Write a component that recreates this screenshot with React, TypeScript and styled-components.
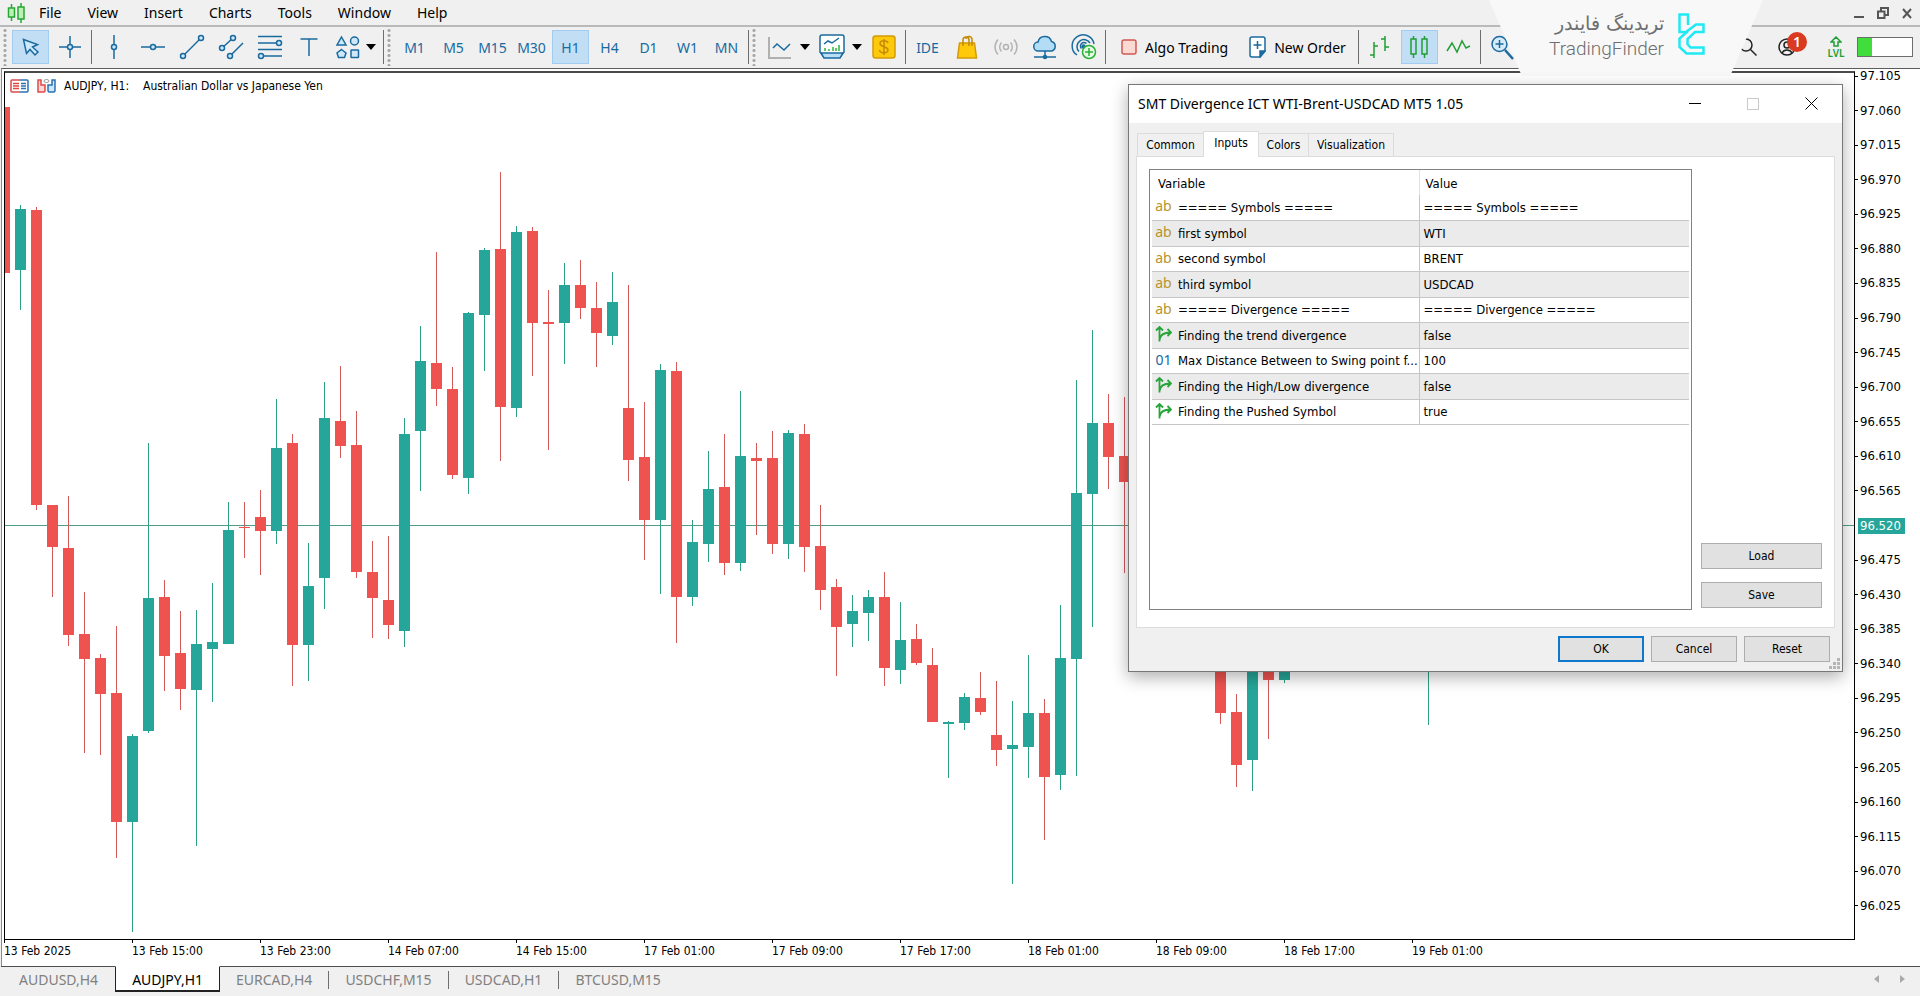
import React from 'react';
import styled, { createGlobalStyle, css } from 'styled-components';

const UI = '"Noto Sans", "Open Sans", sans-serif';
const TAHOMA = '"DejaVu Sans Condensed", "DejaVu Sans", sans-serif';
const BLUE = '#1a6a9f';
const PALE = '#cfe9fb';
const GREEN = '#1f9f33';
const UP = '#26a69a';
const DOWN = '#ef5350';

const GlobalStyle = createGlobalStyle`
  *, *::before, *::after { box-sizing: border-box; }
  html, body { margin: 0; padding: 0; }
  body { background: #f0f0f0; font-family: ${UI}; color: #000; overflow: hidden; }
  button { font: inherit; color: inherit; background: none; border: 0; padding: 0; margin: 0; }
`;

/* ---------- shell ---------- */

const Shell = styled.div`
  position: relative;
  display: flex;
  flex-direction: column;
  height: 100vh;
  background: #f0f0f0;
`;

const MenuBar = styled.nav`
  display: flex;
  align-items: center;
  height: 27px;
  padding: 0 7px;
  border-bottom: 2px solid #b9b9b9;
`;

const MenuItem = styled.button`
  padding: 0 13px;
  font-size: 14px;
  line-height: 24px;
`;

const WindowControls = styled.div`
  display: flex;
  gap: 12px;
  margin-left: auto;
`;

const WindowControl = styled.button`
  display: flex;
  width: 12px;
  height: 12px;
`;

const Toolbar = styled.div`
  display: flex;
  align-items: center;
  height: 41px;
  padding: 0 7px 1px 3px;
`;

const Grip = styled.span`
  width: 4px;
  height: 38px;
  margin-right: 5px;
  background: radial-gradient(circle, #a5a5a5 1px, transparent 2px) 0 0 / 4px 5px repeat-y;
`;

const Separator = styled.span`
  width: 1px;
  height: 34px;
  margin: 0 3px;
  background: #6d6d6d;
`;

const Group = styled.div`
  display: flex;
  gap: 2px;
`;

const ToolButton = styled.button<{ $active?: boolean }>`
  display: flex;
  align-items: center;
  justify-content: center;
  width: 37px;
  height: 34px;
  font-size: 14px;
  color: ${BLUE};
  ${(p) =>
    p.$active &&
    css`
      background: #c2def5;
      outline: 1px solid #a3cdf0;
      outline-offset: -1px;
    `}
`;

const DropButton = styled.button<{ $last?: boolean }>`
  width: 9px;
  height: 34px;
  margin-right: ${(p) => (p.$last ? 5 : 2)}px;
  display: flex;
  align-items: center;
`;

const Caret = styled.span`
  border: 5px solid transparent;
  border-top: 6px solid #000;
  border-bottom: 0;
`;

const LabelButton = styled.button`
  display: flex;
  align-items: center;
  gap: 8px;
  height: 34px;
  padding: 0 9px 0 12px;
  font-size: 14px;
  white-space: nowrap;
`;

const StatusGroup = styled.div`
  display: flex;
  align-items: center;
  margin-left: auto;
  gap: 11px;
`;

const AccountButton = styled.button`
  position: relative;
  display: flex;
  width: 38px;
  height: 30px;
  align-items: center;
  padding-left: 1px;
`;

const Badge = styled.span`
  position: absolute;
  left: 10px;
  top: 0;
  width: 20px;
  height: 20px;
  border-radius: 50%;
  background: #d93a20;
  color: #fff;
  font-size: 14px;
  font-weight: 600;
  line-height: 20px;
  text-align: center;
`;

const Level = styled.div`
  display: flex;
  flex-direction: column;
  align-items: center;
  width: 20px;
  font-size: 10px;
  line-height: 10px;
  font-weight: 600;
  color: ${GREEN};
`;

const Battery = styled.div`
  width: 56px;
  height: 20px;
  border: 1px solid #6d6d6d;
  background: linear-gradient(90deg, #41dd3c 14px, #fff 14px);
`;

/* ---------- brand ---------- */

const Brand = styled.aside`
  position: absolute;
  top: 0;
  right: 157px;
  width: 274px;
  height: 76px;
  display: flex;
  justify-content: center;
  align-items: flex-start;
  gap: 14px;
  padding: 10px 0 0 2px;
  background: #f8f8f8;
  clip-path: polygon(0 0, 100% 0, 88% 100%, 12% 100%);
`;

const BrandText = styled.div`
  display: flex;
  flex-direction: column;
  align-items: flex-end;
  font-family: Roboto, sans-serif;
  font-weight: 300;
  font-size: 19px;
  line-height: 26px;
  color: #6e6e6e;
`;

const BrandNative = styled.span`
  font-family: "DejaVu Sans", sans-serif;
  font-weight: 200;
`;

/* ---------- chart ---------- */

const ChartWindow = styled.main`
  flex: 1;
  min-height: 0;
  display: grid;
  grid-template-columns: minmax(0, 1fr) 65px;
  grid-template-rows: minmax(0, 1fr) 26px;
  margin-left: 1px;
  padding-left: 3px;
  border-top: 1px solid #5c5c5c;
  border-left: 1px solid #8a8a8a;
  background: #fff;
`;

const Plot = styled.section`
  display: flex;
  flex-direction: column;
  min-height: 0;
  margin-top: 2px;
  margin-left: -1px;
  border: 1px solid #000;
  border-top: 2px solid #4a4a4a;
`;

const PlotTitle = styled.header`
  display: flex;
  align-items: center;
  gap: 8px;
  height: 26px;
  padding-left: 5px;
  font-family: ${TAHOMA};
  font-size: 12px;
`;

const PlotSymbol = styled.span`
  min-width: 71px;
`;

const Candles = styled.svg`
  flex: 1;
  min-height: 0;
  width: 100%;
  overflow: hidden;
  shape-rendering: crispEdges;
`;

const PriceScale = styled.ol`
  display: flex;
  flex-direction: column;
  justify-content: space-between;
  list-style: none;
  margin: 4px 0 0;
  padding: 0 0 31px;
`;

const Price = styled.li<{ $current?: boolean }>`
  display: flex;
  align-items: center;
  gap: 2px;
  height: 6px;
  font-family: ${TAHOMA};
  font-size: 13px;
  line-height: 6px;
  &::before {
    content: "";
    width: 3px;
    height: 1px;
    background: #000;
  }
  ${(p) =>
    p.$current &&
    css`
      width: 47px;
      height: 16px;
      margin: -5px 0 -5px 3px;
      padding-left: 2px;
      gap: 0;
      background: ${UP};
      color: #fff;
      &::before { display: none; }
    `}
`;

const TimeScale = styled.ol`
  grid-column: 1 / -1;
  display: flex;
  list-style: none;
  margin: 0 0 0 -1px;
  padding: 0;
`;

const Time = styled.li`
  flex: 0 0 128px;
  font-family: ${TAHOMA};
  font-size: 12px;
  line-height: 16px;
  &::before {
    content: "";
    display: block;
    width: 1px;
    height: 3px;
    background: #000;
  }
`;

const ChartTabs = styled.footer`
  display: flex;
  align-items: flex-start;
  height: 30px;
  margin-left: 1px;
  padding-left: 2px;
  border-top: 1px solid #4e4e4e;
`;

const ChartTab = styled.button<{ $active?: boolean }>`
  height: 25px;
  padding: 0 16px;
  font-size: 14px;
  line-height: 25px;
  color: #808080;
  ${(p) =>
    p.$active &&
    css`
      margin: -1px 0 0 1px;
      height: 26px;
      color: #000;
      background: #fff;
      border: 1px solid #222;
      border-top-color: #fff;
      border-bottom-width: 2px;
    `}
`;

const TabDivider = styled.span`
  flex: none;
  width: 1px;
  height: 18px;
  margin-top: 4px;
  background: #6f6f6f;
`;

const TabScroll = styled.div`
  display: flex;
  gap: 21px;
  margin: 8px 15px 0 auto;
`;

const ScrollArrow = styled.button<{ $right?: boolean }>`
  border: 4px solid transparent;
  ${(p) => (p.$right ? 'border-left: 5px solid #aaa; border-right: 0;' : 'border-right: 5px solid #aaa; border-left: 0;')}
`;

/* ---------- dialog ---------- */

const Dialog = styled.section`
  position: absolute;
  top: 84px;
  right: 77px;
  width: 715px;
  display: flex;
  flex-direction: column;
  border: 1px solid #777;
  background: #f0f0f0;
  box-shadow: 0 5px 16px rgba(0, 0, 0, 0.32);
  font-family: ${TAHOMA};
  font-size: 12px;
`;

const TitleBar = styled.header`
  display: flex;
  align-items: center;
  height: 38px;
  padding: 0 24px 1px 9px;
  background: #fff;
  font-family: ${UI};
`;

const DialogTitle = styled.h1`
  margin: 0 auto 0 0;
  font-size: 14px;
  font-weight: 400;
`;

const DialogControl = styled.button<{ $dim?: boolean }>`
  display: flex;
  margin-left: 46px;
  color: ${(p) => (p.$dim ? '#c9c9c9' : '#000')};
`;

const TabList = styled.div`
  display: flex;
  align-items: flex-end;
  height: 33px;
  padding-left: 9px;
`;

const Tab = styled.button<{ $active?: boolean; $w: number }>`
  width: ${(p) => p.$w}px;
  height: 23px;
  line-height: 22px;
  text-align: center;
  border: 1px solid #dcdcdc;
  border-bottom: 0;
  margin-left: -1px;
  ${(p) =>
    p.$active &&
    css`
      height: 26px;
      padding-bottom: 3px;
      margin-bottom: -1px;
      background: #fff;
      z-index: 1;
    `}
`;

const TabPanel = styled.div`
  display: flex;
  margin: 0 7px;
  height: 472px;
  padding: 12px 12px 17px 12px;
  gap: 9px;
  border: 1px solid #dcdcdc;
  background: #fff;
`;

const ListBox = styled.div`
  flex: 1;
  padding: 0 2px;
  border: 1px solid #828282;
`;

const ParamTable = styled.table`
  width: 100%;
  table-layout: fixed;
  border-collapse: collapse;
  text-align: left;
  font-size: 13px;
`;

const HeadCell = styled.th<{ $name?: boolean }>`
  width: ${(p) => (p.$name ? '267px' : 'auto')};
  height: 25px;
  padding: 1px 0 0 6px;
  font-weight: 400;
  border-right: ${(p) => (p.$name ? '1px solid #e2e2e2' : '0')};
`;

const ParamRow = styled.tr`
  height: 25px;
  border-bottom: 1px solid #c6c6c6;
  &:nth-child(even) { height: 26px; background: #ebebeb; }
`;

const NameCell = styled.td`
  padding: 0 0 0 3px;
  border-right: 1px solid #c6c6c6;
`;

const NameLine = styled.div`
  display: flex;
  align-items: center;
  gap: 6px;
  white-space: nowrap;
`;

const ValueCell = styled.td`
  padding: 0 4px;
`;

const Kind = styled.span<{ $color: string }>`
  display: flex;
  flex: 0 0 17px;
  width: 17px;
  justify-content: center;
  padding-bottom: 2px;
  font-family: ${UI};
  font-size: 14px;
  line-height: 16px;
  color: ${(p) => p.$color};
`;

const SideActions = styled.div`
  display: flex;
  flex-direction: column;
  justify-content: flex-end;
  gap: 13px;
  padding-bottom: 2px;
`;

const DialogButtons = styled.footer`
  display: flex;
  justify-content: flex-end;
  gap: 7px;
  padding: 8px 12px 9px;
`;

const PushButton = styled.button<{ $wide?: boolean; $primary?: boolean }>`
  width: ${(p) => (p.$wide ? 121 : 86)}px;
  height: 26px;
  border: ${(p) => (p.$primary ? '2px solid #0f78cc' : '1px solid #adadad')};
  background: #e1e1e1;
`;

const ResizeGrip = styled.svg`
  position: absolute;
  right: 1px;
  bottom: 1px;
`;

/* ---------- icons ---------- */

type IconProps = { children: React.ReactNode; size?: number; color?: string };
const Icon = ({ children, size = 26, color = BLUE }: IconProps) => (
  <svg width={size} height={size} viewBox={`0 0 ${size} ${size}`} fill="none" stroke={color} strokeWidth="1.5" aria-hidden="true">
    {children}
  </svg>
);

const Node = ({ x, y }: { x: number; y: number }) => <circle cx={x} cy={y} r="2.5" fill={PALE} />;

const drawTools: { name: string; art: React.ReactNode }[] = [
  { name: 'Vertical line', art: <><path d="M13 1v24" /><Node x={13} y={13} /></> },
  { name: 'Horizontal line', art: <><path d="M1 13h24" /><Node x={13} y={13} /></> },
  { name: 'Trend line', art: <><path d="M4 22L22 4" /><Node x={4} y={22} /><Node x={22} y={4} /></> },
  { name: 'Channel', art: <><path d="M4 14L15 4M12 22L25 9" /><Node x={4} y={14} /><Node x={15} y={4} /><Node x={12} y={22} /></> },
  { name: 'Fibonacci', art: <><path d="M1 2.500h24M1 9h21M1 15.500h24M4 22h21" /><Node x={22} y={9} /><Node x={4} y={22} /></> },
  { name: 'Text', art: <path d="M4.500 5h17M13 5v17" /> },
  {
    name: 'Objects',
    art: (
      <g fill={PALE}>
        <path d="M6.500 3l4.500 8H2z" />
        <circle cx="19.500" cy="7" r="4" />
        <path d="M6.500 15.500l4.500 3.500-1.500 4.500h-6L2 19z" />
        <rect x="16" y="16" width="7.500" height="7.500" rx="0.500" />
      </g>
    ),
  },
];

const ChartIcon = () => (
  <Icon>
    <path d="M2 3v21h22" stroke="#b0b0b0" strokeWidth="2" />
    <path d="M6 14l4-4 7 6 6-6" />
  </Icon>
);

const IndicatorIcon = () => (
  <Icon>
    <path d="M3 1h20a2 2 0 012 2v15l-4 5H5l-4-5V3a2 2 0 012-2z" fill="#fff" />
    <path d="M2 19h22l-3 5H5z" fill="#b9def7" />
    <path d="M5 10l4-3 4 2 7-5" />
    <path d="M6 17v-3M10 17v-2M14 17v-4M17 17v-3M20 17v-6" stroke="#2cb53d" />
  </Icon>
);

const DollarIcon = () => (
  <Icon>
    <rect x="2" y="2" width="22" height="22" rx="2.500" fill="#fdc90a" stroke="#d39a07" />
    <path d="M17 9c-1-3-8-3-8 .5 0 4 8 2.500 8 6.500 0 4-8 3.500-8.500 0M13 5v16" stroke="#c48a05" />
  </Icon>
);

const BagIcon = () => (
  <Icon>
    <path d="M5.500 9h15l2 15h-19z" fill="#fdc90a" stroke="#d39a07" />
    <path d="M9 12V6a3 3 0 016 0v6M12 5a3 3 0 016 1v6" stroke="#c48a05" />
  </Icon>
);

const SignalIcon = () => (
  <Icon color="#b3b3b3">
    <circle cx="13" cy="13" r="2.500" />
    <path d="M8.500 17.500a6.500 6.500 0 010-9M17.500 8.500a6.500 6.500 0 010 9M5 20.500a11 11 0 010-15M21 5.500a11 11 0 010 15" />
  </Icon>
);

const CloudIcon = () => (
  <Icon>
    <path d="M6.500 17a4.500 4.500 0 01-.5-9 7 7 0 0113.500-.5A5 5 0 0120 17z" fill="#b3dcf7" />
    <path d="M13 17v5M2 23h9M15 23h9" />
    <circle cx="13" cy="23" r="1.500" fill={BLUE} />
  </Icon>
);

const CommunityIcon = () => (
  <Icon>
    <path d="M6 21a11 11 0 1117-11M8 17.500a7 7 0 1111-8.500M10.500 14.500a3.500 3.500 0 115-5" />
    <circle cx="12.500" cy="12.500" r="1.500" fill={BLUE} />
    <circle cx="18" cy="18" r="6.500" fill="#e7f8e4" stroke="#27b236" />
    <path d="M18 14v8M14 18h8" stroke="#27b236" />
  </Icon>
);

const AppIcon = () => (
  <svg width="19" height="20" viewBox="0 0 19 20" fill="#bdf0b4" stroke="#25a833" strokeWidth="1.500" aria-hidden="true">
    <path d="M4.500 1v17M14 0v20" />
    <rect x="1.500" y="5" width="6" height="9" />
    <rect x="11" y="4" width="6" height="12" />
  </svg>
);

const BrandLogo = () => (
  <svg width="27" height="48" viewBox="0 -3 27 48" fill="none" stroke="#1fe9f5" strokeWidth="2.500" aria-hidden="true">
    <path d="M10 12V1.500H1.500V19H8L18 11.500H25.500V19H17L9.500 26v5l3 3.500H25.500V40.500H8.500L1.500 34V25.500L10 18" />
  </svg>
);

const DepthIcon = () => (
  <svg width="19" height="14" viewBox="0 0 19 14" fill="#fff" strokeWidth="1.500" aria-hidden="true">
    <path d="M10 1H2a1 1 0 00-1 1v10a1 1 0 001 1h8" stroke="#e04a45" />
    <path d="M10 1H17a1 1 0 011 1v10a1 1 0 01-1 1H10" stroke="#2a72b5" />
    <path d="M3 4.500h6M3 7h6M3 9.500h6" stroke="#e04a45" />
    <path d="M11 4.500h5M11 7h5M11 9.500h5" stroke="#2a72b5" />
  </svg>
);

const TradeIcon = () => (
  <svg width="19" height="14" viewBox="0 0 19 14" strokeWidth="1.500" aria-hidden="true">
    <path d="M1 1h3v5h4v6l-1 1H1z" fill="#fad9d7" stroke="#e04a45" />
    <path d="M18 1h-3v5h-4v6l1 1h5l1-1z" fill="#cde8fa" stroke="#2a72b5" />
    <ellipse cx="9.500" cy="2" rx="2.500" ry="1.500" fill="#fff" stroke="#999" strokeWidth="1" />
  </svg>
);

const BranchIcon = () => (
  <svg width="17" height="16" viewBox="0 0 17 16" fill="none" stroke="#27a53a" strokeWidth="1.800" aria-hidden="true">
    <path d="M1 4.500L4.500 1 8 4.500M4.500 1v14.500M4.500 14c.5-5 4-7.500 11-7.500M12.500 3l3.500 3.500L12.500 10" />
  </svg>
);

/* ---------- data ---------- */

const menu = ['File', 'View', 'Insert', 'Charts', 'Tools', 'Window', 'Help'];
const timeframes = ['M1', 'M5', 'M15', 'M30', 'H1', 'H4', 'D1', 'W1', 'MN'];
const times = [
  '13 Feb 2025', '13 Feb 15:00', '13 Feb 23:00', '14 Feb 07:00', '14 Feb 15:00', '17 Feb 01:00',
  '17 Feb 09:00', '17 Feb 17:00', '18 Feb 01:00', '18 Feb 09:00', '18 Feb 17:00', '19 Feb 01:00',
];
const prices = Array.from({ length: 25 }, (_, i) => (97.105 - i * 0.045).toFixed(3));
const chartTabs = ['AUDUSD,H4', 'AUDJPY,H1', 'EURCAD,H4', 'USDCHF,M15', 'USDCAD,H1', 'BTCUSD,M15'];

type Candle = [index: number, rising: 0 | 1, high: number, top: number, bottom: number, low: number];

/* Heights are measured downwards from the top of the window. */
const candles: Candle[] = [
  [0, 0, 107, 107, 273, 273], [1, 1, 205, 209, 270, 310], [2, 0, 207, 210, 505, 510], [3, 0, 505, 505, 547, 597],
  [4, 0, 496, 548, 635, 646], [5, 0, 592, 634, 659, 753], [6, 0, 654, 658, 694, 755], [7, 0, 626, 693, 822, 858],
  [8, 1, 734, 736, 822, 932], [9, 1, 443, 598, 731, 733], [10, 0, 580, 597, 656, 691], [11, 0, 611, 653, 689, 710],
  [12, 1, 610, 644, 690, 846], [13, 1, 583, 642, 649, 702], [14, 1, 502, 530, 644, 644], [15, 0, 502, 527, 528, 558],
  [16, 0, 490, 517, 531, 575], [17, 1, 399, 448, 531, 544], [18, 0, 434, 443, 645, 686], [19, 1, 543, 586, 645, 681],
  [20, 1, 382, 418, 578, 609], [21, 0, 366, 421, 446, 458], [22, 0, 411, 445, 572, 578], [23, 0, 541, 572, 598, 638],
  [24, 0, 536, 600, 625, 639], [25, 1, 418, 434, 631, 647], [26, 1, 326, 361, 431, 491], [27, 0, 252, 363, 389, 406],
  [28, 0, 367, 389, 475, 479], [29, 1, 312, 313, 478, 494], [30, 1, 248, 250, 315, 371], [31, 0, 172, 249, 407, 461],
  [32, 1, 226, 232, 408, 417], [33, 0, 227, 231, 323, 376], [34, 0, 290, 322, 324, 450], [35, 1, 263, 285, 323, 364],
  [36, 0, 260, 285, 308, 319], [37, 0, 282, 308, 333, 367], [38, 1, 272, 302, 336, 345], [39, 0, 285, 408, 460, 481],
  [40, 0, 402, 457, 520, 560], [41, 1, 364, 370, 520, 594], [42, 0, 362, 371, 597, 643], [43, 1, 520, 542, 597, 606],
  [44, 1, 451, 489, 544, 562], [45, 0, 434, 487, 563, 575], [46, 1, 391, 456, 563, 571], [47, 0, 443, 458, 461, 535],
  [48, 0, 431, 458, 544, 554], [49, 1, 430, 433, 544, 559], [50, 0, 424, 434, 547, 572], [51, 0, 505, 546, 590, 610],
  [52, 0, 579, 587, 627, 676], [53, 1, 595, 611, 624, 647], [54, 1, 590, 597, 613, 641], [55, 0, 572, 597, 668, 686],
  [56, 1, 602, 640, 670, 684], [57, 0, 624, 639, 663, 665], [58, 0, 648, 665, 722, 722], [59, 1, 721, 722, 724, 778],
  [60, 1, 693, 697, 723, 730], [61, 0, 672, 698, 712, 715], [62, 0, 681, 735, 750, 766], [63, 1, 701, 745, 749, 884],
  [64, 1, 655, 713, 747, 778], [65, 0, 699, 713, 777, 840], [66, 1, 605, 658, 775, 790], [67, 1, 380, 493, 659, 776],
  [68, 1, 330, 423, 494, 627], [69, 0, 394, 423, 457, 489], [70, 0, 397, 456, 482, 573], [76, 0, 640, 640, 713, 724],
  [77, 0, 694, 712, 765, 787], [78, 1, 640, 640, 760, 791], [79, 0, 640, 640, 680, 739], [80, 1, 640, 640, 680, 683],
  [89, 1, 600, 600, 601, 725],
];

type Param = { kind: 'ab' | '01' | 'bool'; name: string; value: string };
const params: Param[] = [
  { kind: 'ab', name: '===== Symbols =====', value: '===== Symbols =====' },
  { kind: 'ab', name: 'first symbol', value: 'WTI' },
  { kind: 'ab', name: 'second symbol', value: 'BRENT' },
  { kind: 'ab', name: 'third symbol', value: 'USDCAD' },
  { kind: 'ab', name: '===== Divergence =====', value: '===== Divergence =====' },
  { kind: 'bool', name: 'Finding the trend divergence', value: 'false' },
  { kind: '01', name: 'Max Distance Between to Swing point f...', value: '100' },
  { kind: 'bool', name: 'Finding the High/Low divergence', value: 'false' },
  { kind: 'bool', name: 'Finding the Pushed Symbol', value: 'true' },
];

/* ---------- parts ---------- */

const PLOT_LEFT = 5;
const PLOT_TOP = 99;

const CandleChart = () => (
  <Candles role="img" aria-label="AUDJPY hourly candles">
    <g transform={`translate(${-PLOT_LEFT} ${-PLOT_TOP})`}>
      <rect x={PLOT_LEFT} y="525" width="100%" height="1" fill="#4f9c8b" />
      {candles.map(([i, rising, high, top, bottom, low]) => (
        <g key={i} fill={rising ? UP : DOWN}>
          <rect x={i * 16 + 4} y={high} width="1" height={low - high} fill={rising ? '#2f9f83' : '#d4575a'} />
          <rect x={i * 16 - 1} y={top} width="11" height={bottom - top} />
        </g>
      ))}
    </g>
  </Candles>
);

const MainToolbar = () => (
  <Toolbar>
    <Grip />
    <Group>
      <ToolButton $active aria-label="Cursor">
        <Icon><path d="M5.500 5.500l3 14 3.500-4 5 5.500 3-3-5.500-5 5-2.500z" fill={PALE} /></Icon>
      </ToolButton>
      <ToolButton aria-label="Crosshair">
        <Icon><path d="M13 2v22M2 13h22" /><Node x={13} y={13} /></Icon>
      </ToolButton>
    </Group>
    <Separator />
    <Group>
      {drawTools.map((t) => (
        <ToolButton key={t.name} aria-label={t.name}><Icon>{t.art}</Icon></ToolButton>
      ))}
    </Group>
    <DropButton $last aria-label="More objects"><Caret /></DropButton>
    <Separator />
    <Grip />
    <Group>
      {timeframes.map((t) => (
        <ToolButton key={t} $active={t === 'H1'}>{t}</ToolButton>
      ))}
    </Group>
    <Separator />
    <Grip />
    <Group>
      <ToolButton aria-label="Chart type"><ChartIcon /></ToolButton>
      <DropButton aria-label="Chart types"><Caret /></DropButton>
      <ToolButton aria-label="Indicators"><IndicatorIcon /></ToolButton>
      <DropButton aria-label="Indicator list"><Caret /></DropButton>
      <ToolButton aria-label="Quotes"><DollarIcon /></ToolButton>
    </Group>
    <Separator />
    <Group>
      <ToolButton>IDE</ToolButton>
      <ToolButton aria-label="Market"><BagIcon /></ToolButton>
      <ToolButton aria-label="Signals"><SignalIcon /></ToolButton>
      <ToolButton aria-label="Virtual hosting"><CloudIcon /></ToolButton>
      <ToolButton aria-label="Community"><CommunityIcon /></ToolButton>
    </Group>
    <Separator />
    <LabelButton>
      <Icon size={16}><rect x="1" y="1" width="14" height="14" rx="2" fill="#fbd9d3" stroke="#cf5a55" /></Icon>
      Algo Trading
    </LabelButton>
    <LabelButton>
      <svg width="17" height="22" viewBox="0 0 17 22" fill="#fff" stroke={BLUE} strokeWidth="1.500" aria-hidden="true">
        <path d="M3 1h11a2 2 0 012 2v12l-5 6H3a2 2 0 01-2-2V3a2 2 0 012-2z" />
        <path d="M16 15h-5v6z" fill={BLUE} />
        <path d="M8.500 5v8M4.500 9h8" />
      </svg>
      New Order
    </LabelButton>
    <Separator />
    <Group>
      <ToolButton aria-label="Bar chart">
        <Icon color={GREEN}><path d="M7 8v16M3 21h4M7 12h4M18 2v15M14 5h4M18 13h4" /></Icon>
      </ToolButton>
      <ToolButton $active aria-label="Candlesticks">
        <Icon color={GREEN}><path d="M7.500 2v3M7.500 20v4M18.500 2v3M18.500 20v4" /><rect x="5" y="5" width="5" height="15" /><rect x="16" y="5" width="5" height="15" /></Icon>
      </ToolButton>
      <ToolButton aria-label="Line chart">
        <Icon color={GREEN}><path d="M2 17l5-8 5 9 5-11 4 7 4-2" /></Icon>
      </ToolButton>
    </Group>
    <Separator />
    <ToolButton aria-label="Zoom in">
      <Icon><circle cx="10.500" cy="10" r="7.500" fill="#d7ecfa" /><path d="M16 16l8 9" strokeWidth="2.500" /><path d="M10.500 6v8M6.500 10h8" /></Icon>
    </ToolButton>
    <StatusGroup>
      <ToolButton aria-label="Search">
        <Icon size={18} color="#222"><circle cx="7" cy="7" r="6" /><path d="M11.500 11.500l6 6" /></Icon>
      </ToolButton>
      <AccountButton aria-label="Account">
        <Icon size={18} color="#222"><circle cx="9" cy="9" r="8" /><circle cx="9" cy="7" r="3" /><path d="M4 15c2-4 8-4 10 0" /></Icon>
        <Badge>1</Badge>
      </AccountButton>
      <Level>
        <svg width="12" height="12" viewBox="0 0 12 12" fill="none" stroke={GREEN} strokeWidth="1.500" aria-hidden="true">
          <path d="M6 1l5 5H8v4H4V6H1z" />
        </svg>
        LVL
      </Level>
      <Battery />
    </StatusGroup>
  </Toolbar>
);

const InputsDialog = () => (
  <Dialog role="dialog" aria-labelledby="dialog-title">
    <TitleBar>
      <DialogTitle id="dialog-title">SMT Divergence ICT WTI-Brent-USDCAD MT5 1.05</DialogTitle>
      <DialogControl aria-label="Minimize">
        <svg width="12" height="12" stroke="currentColor" fill="none" aria-hidden="true"><path d="M0 5.500h12" /></svg>
      </DialogControl>
      <DialogControl $dim aria-label="Maximize">
        <svg width="12" height="12" stroke="currentColor" fill="none" aria-hidden="true"><rect x="0.500" y="0.500" width="11" height="11" /></svg>
      </DialogControl>
      <DialogControl aria-label="Close">
        <svg width="13" height="13" stroke="currentColor" fill="none" aria-hidden="true"><path d="M0.500 0.500l12 12M12.500 0.500l-12 12" /></svg>
      </DialogControl>
    </TitleBar>
    <TabList role="tablist">
      <Tab role="tab" $w={67}>Common</Tab>
      <Tab role="tab" $w={56} $active aria-selected>Inputs</Tab>
      <Tab role="tab" $w={51}>Colors</Tab>
      <Tab role="tab" $w={86}>Visualization</Tab>
    </TabList>
    <TabPanel role="tabpanel">
      <ListBox>
        <ParamTable>
          <thead>
            <tr>
              <HeadCell $name>Variable</HeadCell>
              <HeadCell>Value</HeadCell>
            </tr>
          </thead>
          <tbody>
            {params.map((p) => (
              <ParamRow key={p.name}>
                <NameCell>
                  <NameLine>
                    <Kind $color={p.kind === 'ab' ? '#b8932c' : BLUE}>
                      {p.kind === 'bool' ? <BranchIcon /> : p.kind}
                    </Kind>
                    {p.name}
                  </NameLine>
                </NameCell>
                <ValueCell>{p.value}</ValueCell>
              </ParamRow>
            ))}
          </tbody>
        </ParamTable>
      </ListBox>
      <SideActions>
        <PushButton $wide>Load</PushButton>
        <PushButton $wide>Save</PushButton>
      </SideActions>
    </TabPanel>
    <DialogButtons>
      <PushButton $primary>OK</PushButton>
      <PushButton>Cancel</PushButton>
      <PushButton>Reset</PushButton>
    </DialogButtons>
    <ResizeGrip width="12" height="12" fill="#b5b5b5" aria-hidden="true">
      <path d="M8 0h3v3H8zM4 4h3v3H4zM8 4h3v3H8zM0 8h3v3H0zM4 8h3v3H4zM8 8h3v3H8z" />
    </ResizeGrip>
  </Dialog>
);

export default function App() {
  return (
    <Shell>
      <GlobalStyle />
      <MenuBar>
        <AppIcon />
        {menu.map((m) => (
          <MenuItem key={m}>{m}</MenuItem>
        ))}
        <WindowControls>
          <WindowControl aria-label="Minimize">
            <svg width="12" height="12" stroke="#555" strokeWidth="2" aria-hidden="true"><path d="M1 10h10" /></svg>
          </WindowControl>
          <WindowControl aria-label="Restore">
            <svg width="12" height="12" stroke="#555" strokeWidth="2" fill="none" aria-hidden="true"><path d="M1 4.500h6.500V11H1zM4 4V1h7v7H8" /></svg>
          </WindowControl>
          <WindowControl aria-label="Close">
            <svg width="12" height="12" stroke="#555" strokeWidth="2" aria-hidden="true"><path d="M2 2l8 9M10 2l-8 9" /></svg>
          </WindowControl>
        </WindowControls>
      </MenuBar>
      <MainToolbar />
      <ChartWindow>
        <Plot>
          <PlotTitle>
            <DepthIcon />
            <TradeIcon />
            <PlotSymbol>AUDJPY, H1:</PlotSymbol>
            <span>Australian Dollar vs Japanese Yen</span>
          </PlotTitle>
          <CandleChart />
        </Plot>
        <PriceScale>
          {prices.map((p) => (
            <Price key={p} $current={p === '96.520'}>{p}</Price>
          ))}
        </PriceScale>
        <TimeScale>
          {times.map((t) => (
            <Time key={t}>{t}</Time>
          ))}
        </TimeScale>
      </ChartWindow>
      <ChartTabs>
        {chartTabs.map((t, i) => (
          <React.Fragment key={t}>
            {i > 2 && <TabDivider />}
            <ChartTab $active={i === 1}>{t}</ChartTab>
          </React.Fragment>
        ))}
        <TabScroll>
          <ScrollArrow aria-label="Previous tabs" />
          <ScrollArrow $right aria-label="Next tabs" />
        </TabScroll>
      </ChartTabs>
      <Brand>
        <BrandText>
          <BrandNative lang="fa" dir="rtl">تریدینگ فایندر</BrandNative>
          <span>TradingFinder</span>
        </BrandText>
        <BrandLogo />
      </Brand>
      <InputsDialog />
    </Shell>
  );
}
